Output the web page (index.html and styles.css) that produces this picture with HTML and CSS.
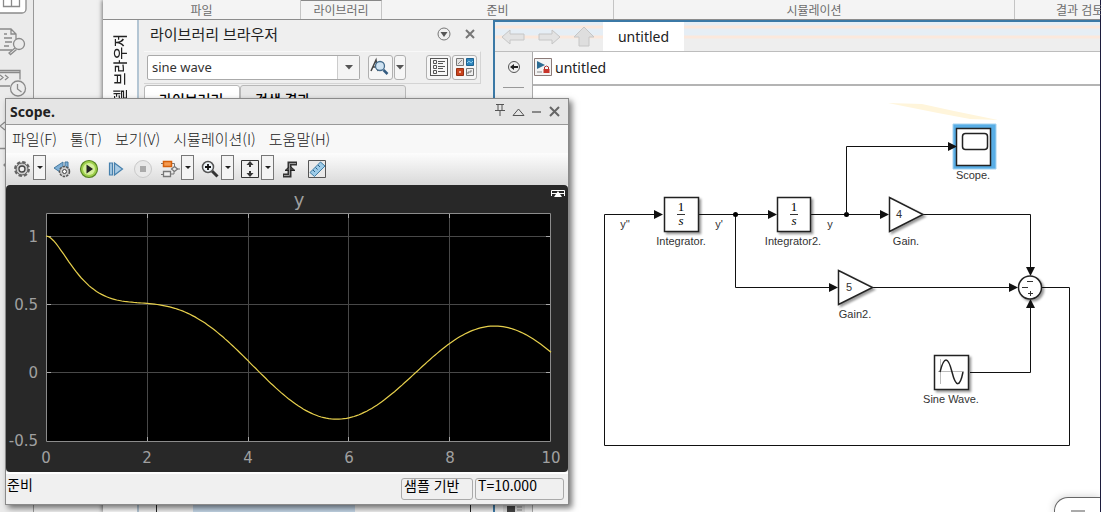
FILE: index.html
```html
<!DOCTYPE html>
<html lang="ko">
<head>
    <meta charset="UTF-8">
    <meta name="viewport" content="width=device-width, initial-scale=1.0">
    <title>untitled - Simulink</title>
    <link rel="stylesheet" href="styles.css">
</head>
<body>

    <!-- Left icon rail -->
    <nav class="rail">
        <svg width="33" height="175" viewBox="0 0 33 175" fill="none" stroke="#8a8a8a" stroke-width="1.3">
            <rect x="-6" y="-8" width="32" height="21" rx="4" fill="#fff"/>
            <path d="M3.500-1v7.500h16v-7.500M11.500-1v7.500"/>
            <path d="M-1 29h12l5 5v5M-1 50h13M11 29v5h5M4 34h3M4 38h8M5 42h7M4 46h5"/>
            <circle cx="19" cy="44" r="5.500"/>
            <path d="M15 48l-6 5 1.500 1.500 6-5"/>
            <path d="M-1 70.500h21v9M-1 72.500h21M-1 86h11M0 75l3 2.500-3 2.500M5 75l3 2.500-3 2.500"/>
            <circle cx="18" cy="88.500" r="7.500"/>
            <path d="M17.500 84v5l4 3"/>
            <path d="M5 122l-5 4 5 4M0 148.500h6M6 163l-2 2 2 2"/>
        </svg>
    </nav>

    <main class="app">
        <div class="ribbon">
            <div class="section file">파일</div>
            <div class="section library">라이브러리</div>
            <div class="section prepare">준비</div>
            <div class="section simulate">시뮬레이션</div>
            <div class="section review">결과 검토</div>
        </div>

        <div class="workspace">
            <div class="side-tab"><span>모델 브라우저</span></div>

            <section class="library-panel">
                <header class="panel-title">
                    <h2>라이브러리 브라우저</h2>
                    <button class="plain" aria-label="메뉴">
                        <svg width="14" height="14" viewBox="0 0 14 14"><circle cx="7" cy="7" r="6" fill="none" stroke="#777"/><path d="M3.500 5h7L7 10z" fill="#555"/></svg>
                    </button>
                    <button class="plain" aria-label="닫기">
                        <svg width="10" height="10" viewBox="0 0 10 10"><path d="M1 1l8 8M9 1L1 9" stroke="#777" stroke-width="2"/></svg>
                    </button>
                </header>
                <div class="search-row">
                    <div class="combo">
                        <input type="text" value="sine wave" aria-label="블록 검색">
                        <button aria-label="최근 검색"><svg width="10" height="6" viewBox="0 0 10 6"><path d="M1 1h8L5 5.500z" fill="#555"/></svg></button>
                    </div>
                    <button class="tool find" aria-label="찾기">
                        <svg width="20" height="20" viewBox="0 0 20 20" fill="none"><path d="M1 14L6 3l2 11M3 10h5" stroke="#444" stroke-width="1.500"/><circle cx="10" cy="9" r="4.500" fill="#cfe3f2" stroke="#456c8c" stroke-width="1.300"/><path d="M13.500 13l4 4" stroke="#345b80" stroke-width="2.500"/></svg>
                    </button>
                    <button class="tool find-menu" aria-label="찾기 옵션"><svg width="8" height="6" viewBox="0 0 8 6"><path d="M0 1h8L4 5.500z" fill="#555"/></svg></button>
                    <button class="tool list" aria-label="목록 보기">
                        <svg width="18" height="18" viewBox="0 0 18 18" fill="none" stroke="#555"><rect x=".5" y=".5" width="17" height="17" fill="#f7f7f7"/><path d="M3.500 2.500h3v3h-3zM3.500 7.500h3v3h-3zM3.500 12.500h3v3h-3zM8 3.500h7M8 5.500h5M8 8.500h7M8 10.500h5M8 13.500h7"/></svg>
                    </button>
                    <button class="tool" aria-label="아이콘 보기">
                        <svg width="20" height="20" viewBox="0 0 20 20"><path d="M1.500 1.500h7v7h-7z" fill="#e3e3e3" stroke="#777"/><path d="M3 7l4-4" stroke="#888"/><path d="M11.500 1.500h7v7h-7z" fill="#2e86bd" stroke="#1d6392"/><path d="M12 6q2-3 3-1t3-1" stroke="#9ad4f2" fill="none"/><path d="M1.500 11.500h7v7h-7z" fill="#c9431e" stroke="#963012"/><path d="M4 14h2v2H4z" fill="#f2b59a"/><path d="M11.500 11.500h7v7h-7z" fill="#eee" stroke="#777"/><path d="M13 17v-2h3v-2" stroke="#777" fill="none"/></svg>
                    </button>
                </div>
                <div class="panel-tabs">
                    <button class="active">라이브러리</button>
                    <button>검색 결과</button>
                </div>
                <div class="panel-list"><div class="selected"></div></div>
            </section>

            <section class="editor">
                <div class="nav-bar">
                    <button class="plain" aria-label="뒤로"><svg width="25" height="20" viewBox="0 0 25 20"><path d="M1 10L9 3v4h14v6H9v4z" fill="#e3e3e3" stroke="#c6c6c6"/></svg></button>
                    <button class="plain" aria-label="앞으로"><svg width="25" height="20" viewBox="0 0 25 20"><path d="M24 10l-8-7v4H3v6h13v4z" fill="#e3e3e3" stroke="#c6c6c6"/></svg></button>
                    <button class="plain" aria-label="위로"><svg width="25" height="22" viewBox="0 0 25 22"><path d="M13 1L3 11h5v9h10v-9h5z" fill="#dedede" stroke="#c6c6c6"/></svg></button>
                    <a class="doc-tab" href="#">untitled</a>
                </div>
                <div class="editor-body">
                    <div class="palette">
                        <button class="plain" aria-label="탐색기 표시"><svg width="14" height="14" viewBox="0 0 14 14"><circle cx="7" cy="7" r="5.500" fill="none" stroke="#555"/><path d="M3 7l4-3v2h4v2H7v2z" fill="#222"/></svg></button>
                        <hr>
                        <svg class="palette-end" width="22" height="8" viewBox="0 0 22 8"><path d="M0 0h22v8H0z" fill="#ddd"/><path d="M4 2h8v6H4z" fill="#444"/><path d="M14 3h5M14 6h5" stroke="#888"/></svg>
                    </div>
                    <div class="sheet">
                        <div class="breadcrumb">
                            <svg width="18" height="18" viewBox="0 0 18 18"><path d="M.5.5h17v17H.5z" fill="#f4f4f4" stroke="#8b7b78"/><path d="M3 3l8 4-8 4z" fill="#2d6c93"/><path d="M10.500 11V9q2-2 4 0v2" fill="none" stroke="#a33"/><path d="M9.500 11h6v4h-6z" fill="#c8352b"/><path d="M3 14h5" stroke="#888"/></svg>
                            <a href="#">untitled</a>
                        </div>
                        <svg class="diagram" width="567" height="426" viewBox="533 86 567 426">
                            <defs>
                                <marker id="arrow" markerUnits="userSpaceOnUse" markerWidth="9" markerHeight="9" refX="8" refY="4.500" orient="auto"><path d="M0 0l9 4.500-9 4.500z" fill="#111"/></marker>
                                <filter id="drop" x="-30%" y="-30%" width="170%" height="170%"><feDropShadow dx="2" dy="2" stdDeviation="1" flood-color="#000" flood-opacity=".4"/></filter>
                            </defs>
                            <path class="hint" d="M888 103l34 1 32 7 44 9-28-1-32-6z"/>

                            <!-- signal lines -->
                            <g class="wire">
                                <path d="M1041 287.500h28.500v158h-465v-231H662" marker-end="url(#arrow)"/>
                                <path d="M698 214.500h78" marker-end="url(#arrow)"/>
                                <path d="M735.500 214.500v73H837" marker-end="url(#arrow)"/>
                                <path d="M811 214.500h77" marker-end="url(#arrow)"/>
                                <path d="M923 214.500h107.500V275" marker-end="url(#arrow)"/>
                                <path d="M873 287.500h144" marker-end="url(#arrow)"/>
                                <path d="M970 372.500h60.500V300" marker-end="url(#arrow)"/>
                            </g>
                            <circle cx="735.500" cy="214.500" r="2.500"/>
                            <circle cx="846.500" cy="214.500" r="2.500"/>

                            <!-- blocks -->
                            <g class="block" filter="url(#drop)">
                                <path d="M664.500 197.500h34v34h-34zM777.500 197.500h33v34h-33zM934.500 355.500h34v34h-34z"/>
                                <path d="M889.500 197.500v34l33.500-17zM838.500 270.500v34l34-17z"/>
                                <circle cx="1030" cy="287.500" r="11.500"/>
                            </g>
                            <path class="glow" d="M953 124h43v45h-43z"/>
                            <g class="block">
                                <path d="M956.500 128.500h34v37h-34z"/>
                                <rect x="962.500" y="133.500" width="25" height="16" rx="3"/>
                            </g>
                            <path class="wire" d="M846.500 214.500v-68H956" marker-end="url(#arrow)"/>
                            <path d="M677 214.500h8M790 214.500h8" stroke="#333"/>
                            <path d="M940.500 359v25M938 371.500h26" stroke="#bbb"/>
                            <path class="sine" d="M940 372C944 356 948 356 952 372S960 387 963 372"/>
                            <path d="M1027 281.500h6M1022 287.500h6M1028 293.500h5M1030.500 291v5" stroke="#333"/>

                            <g class="math">
                                <text x="681" y="211">1</text><text class="var" x="681" y="225">s</text>
                                <text x="794" y="211">1</text><text class="var" x="794" y="225">s</text>
                            </g>
                            <g class="label">
                                <text x="681" y="245">Integrator.</text>
                                <text x="793" y="245">Integrator2.</text>
                                <text x="906" y="245">Gain.</text>
                                <text x="855" y="318">Gain2.</text>
                                <text x="973" y="179">Scope.</text>
                                <text x="951" y="403">Sine Wave.</text>
                                <text x="899" y="218">4</text>
                                <text x="849" y="291">5</text>
                                <text x="625" y="228">y''</text>
                                <text x="719" y="228">y'</text>
                                <text x="830" y="228">y</text>
                            </g>
                        </svg>
                        <div class="float-box"><span></span></div>
                    </div>
                </div>
            </section>
        </div>
    </main>

    <!-- Scope window -->
    <section class="scope">
        <header class="scope-title">
            <h1>Scope.</h1>
            <button class="plain" aria-label="고정"><svg width="10" height="18" viewBox="0 0 10 18"><path d="M1 1.500h8M3 1v6M7 1v6M0 7.500h10M5 8v5" stroke="#555" fill="none"/></svg></button>
            <button class="plain" aria-label="위로"><svg width="13" height="10" viewBox="0 0 13 10"><path d="M1 8.500h11L6.500 2z" stroke="#555" fill="none"/></svg></button>
            <button class="plain" aria-label="최소화"><svg width="10" height="10" viewBox="0 0 10 10"><path d="M0 5h9" stroke="#888" stroke-width="2"/></svg></button>
            <button class="plain" aria-label="닫기"><svg width="11" height="11" viewBox="0 0 11 11"><path d="M1 1l9 9M10 1l-9 9" stroke="#666" stroke-width="2"/></svg></button>
        </header>
        <nav class="menu">
            <a href="#">파일(F)</a>
            <a href="#">툴(T)</a>
            <a href="#">보기(V)</a>
            <a href="#">시뮬레이션(I)</a>
            <a href="#">도움말(H)</a>
        </nav>
        <div class="toolbar">
            <button aria-label="설정"><svg width="18" height="18" viewBox="0 0 18 18" fill="none"><circle cx="9" cy="9" r="7" stroke="#666" stroke-width="2" stroke-dasharray="3.500 2"/><circle cx="9" cy="9" r="6" fill="#ccc" stroke="#555"/><circle cx="9" cy="9" r="3" fill="#eee" stroke="#444" stroke-width="1.300"/></svg></button>
            <button class="more" aria-label="설정 옵션"></button>
            <button aria-label="뒤로 스텝"><svg width="18" height="18" viewBox="0 0 18 18"><path d="M1 8l9-6v12zM12 2h3v8h-3z" fill="#7fb0d6" stroke="#45799f"/><circle cx="11.500" cy="11.500" r="5" fill="#ccc" stroke="#555" stroke-width="1.500" stroke-dasharray="2.500 1"/><circle cx="11.500" cy="11.500" r="2" fill="#fff" stroke="#444"/></svg></button>
            <button aria-label="실행"><svg width="20" height="20" viewBox="0 0 20 20"><circle cx="10" cy="10" r="8.500" fill="#9ed04b" stroke="#568324" stroke-width="1.200"/><circle cx="10" cy="10" r="6" fill="#d5ef9c"/><path d="M7.500 5.500v9L14 10z" fill="#222"/></svg></button>
            <button aria-label="앞으로 스텝"><svg width="18" height="18" viewBox="0 0 18 18"><path d="M2.500 3h3v12h-3zM7.500 3v12l8-6z" fill="#a9cbe5" stroke="#4680ad" stroke-width="1.200"/></svg></button>
            <button aria-label="중지" disabled><svg width="20" height="20" viewBox="0 0 20 20"><circle cx="10" cy="10" r="8.500" fill="#e9e9e9" stroke="#c9c9c9"/><path d="M7 7h6v6H7z" fill="#aaa"/></svg></button>
            <button aria-label="블록 강조"><svg width="20" height="20" viewBox="0 0 20 20" fill="none"><path d="M1 4.500h3M11 4.500h3.500V8M14 12v3h-4M1 15.500h3M17 10h3" stroke="#777"/><path d="M3.500 2.500h8v5h-8z" fill="#f49a50" stroke="#d45f0b" stroke-width="1.500"/><path d="M3.500 12.500h7v5h-7zM14.500 7.500l3 2.500-3 2.500-3-2.500z" fill="#eee" stroke="#777" stroke-width="1.300"/></svg></button>
            <button class="more" aria-label="블록 옵션"></button>
            <button aria-label="확대"><svg width="18" height="18" viewBox="0 0 18 18"><path d="M11 11l5.500 5.500" stroke="#333" stroke-width="3"/><circle cx="7" cy="7" r="5.500" fill="#f0f6fa" stroke="#555" stroke-width="1.500"/><path d="M4 7h6M7 4v6" stroke="#111" stroke-width="1.800"/></svg></button>
            <button class="more" aria-label="확대 옵션"></button>
            <button aria-label="축 스케일"><svg width="18" height="18" viewBox="0 0 18 18"><path d="M.5.500h17v17H.5z" fill="#eee" stroke="#333"/><path d="M9 1L5.500 5h7zM9 17l-3.500-4h7z" fill="#333"/><path d="M9 4v3M9 11v3" stroke="#333" stroke-width="2"/></svg></button>
            <button class="more" aria-label="축 옵션"></button>
            <button aria-label="트리거"><svg width="18" height="18" viewBox="0 0 18 18" fill="none"><path d="M2 15.500h6.500V3.500H16" stroke="#333" stroke-width="4"/><path d="M4 10.500L9 6l5 4.500z" fill="#444" stroke="#222"/><path d="M3 15.500h5.500V3.500H15" stroke="#999"/></svg></button>
            <button aria-label="측정"><svg width="18" height="18" viewBox="0 0 18 18"><path d="M.5.500h17v17H.5z" fill="#e9e9e9" stroke="#555"/><path d="M2 12.500L12.500 2 17 6 6.500 16.500z" fill="#9dcbe8" stroke="#3f7ca3"/><path d="M5 10l2 2M7.500 7.500l2 2M10 5l2 2" stroke="#286088"/></svg></button>
        </div>

        <div class="plot">
            <svg viewBox="0 0 562 287">
                <path class="screen" d="M40.500 28.500h504v228h-504z"/>
                <g id="grid"></g>
                <path class="frame" d="M40.500 28.500h504v228h-504z"/>
                <polyline id="curve"/>
                <text class="plot-title" x="293" y="21">y</text>
                <g class="y-axis">
                    <text x="32" y="57">1</text>
                    <text x="32" y="125">0.5</text>
                    <text x="32" y="193">0</text>
                    <text x="32" y="261">-0.5</text>
                </g>
                <g class="x-axis">
                    <text x="40" y="278">0</text>
                    <text x="141" y="278">2</text>
                    <text x="242" y="278">4</text>
                    <text x="343" y="278">6</text>
                    <text x="444" y="278">8</text>
                    <text x="545" y="278">10</text>
                </g>
                <path d="M545.500 11V5.500h13V11M545 8.500h14" stroke="#fff" fill="none"/><path d="M552 6l4 6h-8z" fill="#fff"/>
            </svg>
        </div>

        <footer class="status">
            <span class="state">준비</span>
            <span class="cell mode">샘플 기반</span>
            <span class="cell time">T=10.000</span>
        </footer>
    </section>

    <script src="script.js"></script>
</body>
</html>
```
FILE: styles.css
```css
* {
    margin: 0;
    padding: 0;
    box-sizing: border-box;
}

body {
    font-family: "Noto Sans", "Noto Sans CJK KR", sans-serif;
    background: #f0f0f0;
    color: #222;
    display: flex;
    height: 100vh;
    overflow: hidden;
    position: relative;
}

svg {
    display: block;
    flex-shrink: 0;
}

a {
    color: inherit;
    text-decoration: none;
}

button {
    font-family: inherit;
    display: flex;
    align-items: center;
    justify-content: center;
}

.plain {
    background: none;
    border: none;
}

/* Left rail */
.rail {
    width: 34px;
    flex-shrink: 0;
    background: #ebebeb;
    border-right: 1px solid #999;
}

/* Main application */
.app {
    flex: 1;
    min-width: 0;
    margin-left: 69px;
    display: flex;
    flex-direction: column;
    background: #efefef;
    border-right: 1px solid #1c1c3c;
    box-shadow: -1px 0 4px rgba(0, 0, 0, 0.5);
}

.ribbon {
    display: flex;
    height: 20px;
    flex-shrink: 0;
    background: #f4f4f4;
    border-bottom: 1px solid #8c8c8c;
}

.section {
    flex-shrink: 0;
    border-right: 1px solid #c4c4c4;
    font-size: 12px;
    line-height: 22px;
    color: #6c6c6c;
    text-align: center;
    white-space: nowrap;
}

.file {
    width: 198px;
}

.library {
    width: 81px;
    border-top: 1px solid #888;
    line-height: 20px;
}

.prepare {
    width: 232px;
}

.simulate {
    width: 401px;
}

.review {
    flex: 1;
    min-width: 0;
    border-right: none;
    padding-left: 41px;
    text-align: left;
}

.workspace {
    flex: 1;
    min-height: 0;
    display: flex;
}

.side-tab {
    width: 36px;
    flex-shrink: 0;
    background: #fafafa;
    border-right: 2px solid #b4c6d4;
    padding: 14px 7px;
    overflow: hidden;
}

.side-tab span {
    display: block;
    writing-mode: vertical-rl;
    text-orientation: sideways;
    transform: rotate(180deg);
    font-size: 14px;
    font-weight: 500;
    line-height: 20px;
    white-space: nowrap;
}

/* Library browser */
.library-panel {
    width: 354px;
    flex-shrink: 0;
    display: flex;
    flex-direction: column;
    padding: 0 12px 0 5px;
}

.panel-title {
    display: flex;
    align-items: center;
    gap: 14px;
    height: 31px;
    padding: 0 6px 4px 6px;
}

.panel-title h2 {
    flex: 1;
    font-size: 15px;
    font-weight: 400;
}

.search-row {
    display: flex;
    align-items: center;
    height: 33px;
    padding: 0 3px 1px 3px;
    border: 1px solid #d4d4d4;
    border-top-color: #f8f8f8;
    border-left: none;
}

.combo {
    display: flex;
    flex: 1;
    height: 25px;
    border: 1px solid #aaa;
    border-radius: 2px;
    background: #fff;
}

.combo input {
    flex: 1;
    min-width: 0;
    border: none;
    padding-left: 4px;
    background: none;
    font-family: inherit;
    font-size: 13px;
    color: #333;
}

.combo button {
    width: 22px;
    border: none;
    border-left: 1px solid #ccc;
    background: #f4f4f4;
}

.tool {
    width: 27px;
    height: 25px;
    border: 1px solid #b0b0b0;
    border-radius: 3px;
    background: #f6f6f6;
    margin-left: 1px;
}

.find {
    margin-left: 8px;
}

.find-menu {
    width: 13px;
}

.list {
    margin-left: 20px;
}

.panel-tabs {
    display: flex;
    align-items: flex-start;
    height: 30px;
    padding-top: 1px;
}

.panel-tabs button {
    width: 166px;
    height: 28px;
    border: 1px solid #b8b8b8;
    border-radius: 3px 3px 0 0;
    background: #e8e8e8;
    font-size: 14px;
    font-weight: 500;
    justify-content: flex-start;
    padding-left: 14px;
}

.panel-tabs .active {
    width: 96px;
    background: #fff;
}

.panel-list {
    flex: 1;
    margin: 0 10px 0 12px;
    padding-left: 36px;
    border-left: 1px solid #222;
    border-right: 1px solid #222;
}

.selected {
    width: 162px;
    height: 100%;
    background: #c3d5e6;
}

/* Model editor */
.editor {
    flex: 1;
    min-width: 0;
    display: flex;
    flex-direction: column;
    border-top: 2px solid #3b79a6;
    border-left: 2px solid #3b79a6;
}

.nav-bar {
    display: flex;
    align-items: center;
    gap: 10px;
    height: 30px;
    flex-shrink: 0;
    padding-left: 6px;
    border-bottom: 1px solid #bdbdbd;
    background: linear-gradient(#e6eef5 3px, #fbe8dc 4px, #fbe8dc 6px, #e6eef5 7px, #e6eef5 13px, #fbe8dc 14px, #fbe8dc 16px, #eee 17px);
}

.doc-tab {
    align-self: stretch;
    margin-left: -3px;
    width: 81px;
    background: #fff;
    text-align: center;
    font-size: 14px;
    line-height: 30px;
}

.editor-body {
    flex: 1;
    min-height: 0;
    display: flex;
}

.palette {
    width: 37px;
    flex-shrink: 0;
    display: flex;
    flex-direction: column;
    align-items: center;
    padding-top: 8px;
    background: #f0f0f0;
}

.palette hr {
    width: 21px;
    margin-top: 13px;
    border: none;
    border-top: 1px solid #999;
}

.palette-end {
    margin-top: auto;
}

.sheet {
    flex: 1;
    min-width: 0;
    position: relative;
    overflow: hidden;
    background: #fff;
    border-left: 1px solid #aaa;
}

.breadcrumb {
    display: flex;
    align-items: center;
    gap: 3px;
    height: 34px;
    padding: 0 0 2px 1px;
    border-bottom: 2px solid #b4b4b4;
    font-size: 14px;
}

.wire {
    fill: none;
    stroke: #111;
    stroke-width: 1;
}

.block {
    fill: #fff;
    stroke: #222;
    stroke-width: 1.5;
}

.glow {
    fill: #59aee6;
    stroke: #a6d3f0;
}

.hint {
    fill: #fff5db;
}

.sine {
    fill: none;
    stroke: #222;
    stroke-width: 1.5;
}

.math {
    font-family: "Liberation Serif", serif;
    font-size: 13px;
    text-anchor: middle;
}

.var {
    font-style: italic;
}

.label {
    font-family: "Liberation Sans", sans-serif;
    font-size: 11px;
    fill: #333;
    text-anchor: middle;
}

.float-box {
    position: absolute;
    right: 0;
    bottom: 0;
    width: 46px;
    height: 15px;
    padding: 12px 0 0 16px;
    border: 1px solid #666;
    border-width: 1px 0 0 1px;
    border-radius: 14px 0 0 0;
    background: #fff;
    box-shadow: 0 0 8px rgba(0, 0, 0, 0.2);
}

.float-box span {
    display: block;
    width: 14px;
    height: 2px;
    background: #aaa;
}

/* Scope window */
.scope {
    position: absolute;
    left: 5px;
    top: 98px;
    width: 564px;
    border: 1px solid #8a8a8a;
    background: #f0f0f0;
    box-shadow: 3px 3px 6px rgba(0, 0, 0, 0.55);
}

.scope-title {
    display: flex;
    align-items: center;
    gap: 7px;
    height: 26px;
    padding: 0 8px 0 4px;
    background: #e5e5e5;
    border-bottom: 1px solid #999;
}

.scope-title h1 {
    flex: 1;
    font-size: 14px;
    line-height: 20px;
}

.menu {
    display: flex;
    gap: 13px;
    height: 28px;
    padding-left: 6px;
    background: #f8f8f8;
    font-family: "Noto Sans CJK KR", sans-serif;
    font-size: 15px;
    font-weight: 300;
    line-height: 28px;
}

.toolbar {
    display: flex;
    align-items: center;
    gap: 5px;
    height: 32px;
    padding-left: 5px;
    background: linear-gradient(#fdfdfd, #d9d9d9);
}

.toolbar button {
    width: 22px;
    height: 22px;
    border: none;
    background: none;
}

.toolbar .more {
    width: 13px;
    height: 25px;
    margin: 0 0 4px -5px;
    border: 1px solid #777;
    background: #f4f4f4;
}

.more::after {
    content: "";
    border: 3px solid transparent;
    border-top-color: #222;
    border-bottom: none;
}

.plot {
    background: #282828;
    border-radius: 4px;
    font-family: "DejaVu Sans", sans-serif;
}

.plot text {
    font-size: 15px;
    fill: #a0a0a0;
}

.plot .plot-title {
    font-size: 18px;
    text-anchor: middle;
}

.y-axis {
    text-anchor: end;
}

.x-axis {
    text-anchor: middle;
}

.screen {
    fill: #000;
}

.frame {
    fill: none;
    stroke: #8c8c8c;
}

.grid-line {
    stroke: #484848;
}

.tick {
    stroke: #aaa;
}

#curve {
    fill: none;
    stroke: #e6cf4c;
    stroke-width: 1.2;
}

.status {
    display: flex;
    gap: 2px;
    height: 32px;
    padding: 4px 4px 5px 1px;
    border-top: 2px solid #fff;
    font-family: "Noto Sans CJK KR", sans-serif;
    font-size: 14px;
    line-height: 12px;
    color: #000;
}

.state {
    flex: 1;
}

.cell {
    height: 22px;
    padding-left: 2px;
    border: 1px solid #aaa;
    border-radius: 3px;
}

.mode {
    width: 72px;
}

.time {
    width: 89px;
}
```
FILE: script.js
```js
// Response of y'' + 5y' + 4y = 2 sin(t), y(0) = 1, y'(0) = 0
const response = t => 1.667 * Math.exp(-t) - 0.373 * Math.exp(-4 * t)
    + 0.176 * Math.sin(t) - 0.294 * Math.cos(t);

const left = 40, unitX = 50.5;
const zero = 188, unitY = 137;

const points = [];
for (let i = 0; i <= 200; i++) {
    const t = i / 20;
    points.push((left + t * unitX).toFixed(1) + ',' + (zero - response(t) * unitY).toFixed(1));
}
document.getElementById('curve').setAttribute('points', points.join(' '));

// Grid lines with short ticks at both ends
let lines = '';
[141.5, 242.5, 342.5, 443.5].forEach(x => {
    lines += `<path class="grid-line" d="M${x} 29v227"/>`;
    lines += `<path class="tick" d="M${x} 29v4M${x} 252v4"/>`;
});
[51.5, 119.5, 187.5].forEach(y => {
    lines += `<path class="grid-line" d="M41 ${y}h503"/>`;
    lines += `<path class="tick" d="M41 ${y}h4M540 ${y}h4"/>`;
});
document.getElementById('grid').innerHTML = lines;
```
